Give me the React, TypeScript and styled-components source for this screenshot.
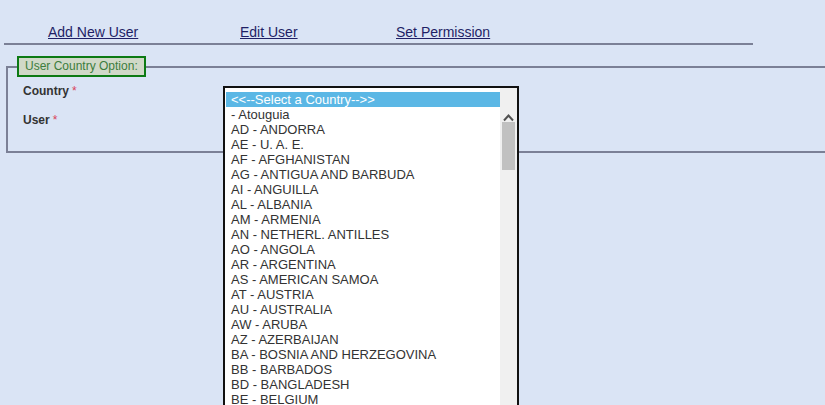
import React from 'react';
import styled, { createGlobalStyle } from 'styled-components';

const GlobalStyle = createGlobalStyle`
  html, body {
    margin: 0;
    padding: 0;
    overflow: hidden;
    background: #dae4f5;
    font-family: "Liberation Sans", Arial, sans-serif;
  }
`;

const Page = styled.div`
  width: 825px;
  height: 405px;
  overflow: hidden;
`;

const Nav = styled.div`
  display: grid;
  grid-template-columns: 192px 156px auto;
  width: 705px;
  margin-left: 4px;
  padding: 23px 0 2px 44px;
  border-bottom: 2px solid #7b8096;
`;

const NavLink = styled.a`
  font-size: 14px;
  line-height: 16px;
  color: #1f1f66;
  text-decoration: underline;
  cursor: pointer;
`;

const Fieldset = styled.fieldset`
  margin: 11px 0 0 6px;
  width: 860px;
  padding: 0 0 16px 9px;
  border: 2px solid #7b8096;
  box-sizing: border-box;
`;

const Legend = styled.legend`
  padding: 0 6px;
  border: 2px solid #0c7a14;
  background: #d0d9c8;
  color: #3d7d3d;
  font-size: 12px;
  line-height: 17px;
`;

const Form = styled.div`
  display: grid;
  grid-template-columns: 200px 1fr;
  grid-auto-rows: 29px;
  padding-left: 6px;
`;

const Label = styled.div`
  font-size: 12px;
  line-height: 29px;
  font-weight: bold;
  color: #333;
`;

const Required = styled.span`
  font-weight: normal;
  color: #d9435a;
  margin-left: 3px;
`;

const Field = styled.div`
  position: relative;
`;

const ListBox = styled.div`
  position: absolute;
  left: 0;
  top: 9px;
  z-index: 10;
  width: 296px;
  height: 340px;
  box-sizing: border-box;
  border: 2px solid #111;
  background: #fff;
  display: flex;
`;

const Options = styled.div`
  flex: 1;
  padding: 4px 0 0 1px;
  overflow: hidden;
`;

const Option = styled.div<{ $selected?: boolean }>`
  font-size: 13px;
  line-height: 15px;
  height: 15px;
  padding-left: 5px;
  white-space: nowrap;
  color: ${p => (p.$selected ? '#fff' : '#333')};
  background: ${p => (p.$selected ? '#5bb7e5' : 'transparent')};
`;

const ScrollTrack = styled.div`
  width: 17px;
  background: #f0f0f0;
  display: flex;
  flex-direction: column;
  align-items: center;
`;

const ArrowBox = styled.div`
  height: 34px;
  width: 17px;
  display: flex;
  align-items: flex-end;
  justify-content: center;
`;

const Thumb = styled.div`
  width: 13px;
  height: 48px;
  background: #c1c1c1;
`;

const countries = [
  '- Atouguia',
  'AD - ANDORRA',
  'AE - U. A. E.',
  'AF - AFGHANISTAN',
  'AG - ANTIGUA AND BARBUDA',
  'AI - ANGUILLA',
  'AL - ALBANIA',
  'AM - ARMENIA',
  'AN - NETHERL. ANTILLES',
  'AO - ANGOLA',
  'AR - ARGENTINA',
  'AS - AMERICAN SAMOA',
  'AT - AUSTRIA',
  'AU - AUSTRALIA',
  'AW - ARUBA',
  'AZ - AZERBAIJAN',
  'BA - BOSNIA AND HERZEGOVINA',
  'BB - BARBADOS',
  'BD - BANGLADESH',
  'BE - BELGIUM',
  'BF - BURKINA FASO',
  'BG - BULGARIA',
];

const App: React.FC = () => {
  return (
    <Page>
      <GlobalStyle />
      <Nav>
        <div><NavLink>Add New User</NavLink></div>
        <div><NavLink>Edit User</NavLink></div>
        <div><NavLink>Set Permission</NavLink></div>
      </Nav>
      <Fieldset>
        <Legend>User Country Option:</Legend>
        <Form>
          <Label>Country<Required>*</Required></Label>
          <Field>
            <ListBox>
              <Options>
                <Option $selected>{'<<--Select a Country-->>'}</Option>
                {countries.map(c => (
                  <Option key={c}>{c}</Option>
                ))}
              </Options>
              <ScrollTrack>
                <ArrowBox>
                  <svg width="11" height="9" viewBox="0 0 11 9">
                    <polyline points="1,7.5 5.5,2.5 10,7.5" fill="none" stroke="#505050" strokeWidth="2" />
                  </svg>
                </ArrowBox>
                <Thumb />
              </ScrollTrack>
            </ListBox>
          </Field>
          <Label>User<Required>*</Required></Label>
          <Field />
        </Form>
      </Fieldset>
    </Page>
  );
};

export default App;
